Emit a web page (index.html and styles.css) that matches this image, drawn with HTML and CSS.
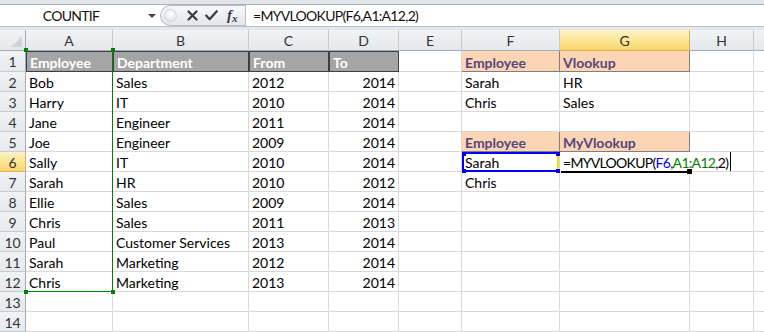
FILE: index.html
```html
<!DOCTYPE html>
<html lang="en">
<head>
    <meta charset="UTF-8">
    <title>MYVLOOKUP - Sheet1</title>
    <link rel="stylesheet" href="styles.css">
</head>
<body>
    <div class="title-strip"></div>

    <!-- formula bar -->
    <div class="formula-bar">
        <div class="name-box">
            <span class="name-text">COUNTIF</span>
            <span class="name-arrow"></span>
        </div>
        <div class="fx-tools">
            <span class="grip"></span>
            <svg class="tool-icon" width="11" height="11" viewBox="0 0 11 11">
                <path d="M1.5 1.5L9.5 9.5M9.5 1.5L1.5 9.5" stroke="#3a3a3a" stroke-width="2.2" stroke-linecap="round" fill="none"/>
            </svg>
            <svg class="tool-icon" width="13" height="11" viewBox="0 0 13 11">
                <path d="M1.2 5.6L4.6 9.2L11.8 1.2" stroke="#3a3a3a" stroke-width="2.2" stroke-linecap="round" stroke-linejoin="round" fill="none"/>
            </svg>
            <span class="fx-label"><i>f</i><i class="fx-sub">x</i></span>
        </div>
        <div class="formula-input">=MYVLOOKUP(F6,A1:A12,2)</div>
    </div>
    <div class="bar-gap"></div>

    <!-- worksheet -->
    <div class="sheet">
        <table class="grid">
            <colgroup>
                <col class="w-hdr"><col class="w-a"><col class="w-b"><col class="w-c"><col class="w-d">
                <col class="w-e"><col class="w-f"><col class="w-g"><col class="w-h"><col class="w-i">
            </colgroup>
            <thead>
                <tr class="col-heads">
                    <th class="corner"></th><th>A</th><th>B</th><th>C</th><th>D</th>
                    <th>E</th><th>F</th><th class="current">G</th><th>H</th><th></th>
                </tr>
            </thead>
            <tbody>
                <tr class="first-row">
                    <th>1</th><td class="check">Employee</td><td class="check">Department</td><td class="check">From</td><td class="check">To</td>
                    <td></td><td class="input-head">Employee</td><td class="input-head">Vlookup</td><td></td><td></td>
                </tr>
                <tr><th>2</th><td>Bob</td><td>Sales</td><td>2012</td><td class="num">2014</td><td></td><td>Sarah</td><td>HR</td><td></td><td></td></tr>
                <tr><th>3</th><td>Harry</td><td>IT</td><td>2010</td><td class="num">2014</td><td></td><td>Chris</td><td>Sales</td><td></td><td></td></tr>
                <tr><th>4</th><td>Jane</td><td>Engineer</td><td>2011</td><td class="num">2014</td><td></td><td></td><td></td><td></td><td></td></tr>
                <tr><th>5</th><td>Joe</td><td>Engineer</td><td>2009</td><td class="num">2014</td><td></td><td class="input-head">Employee</td><td class="input-head">MyVlookup</td><td></td><td></td></tr>
                <tr>
                    <th class="current">6</th><td>Sally</td><td>IT</td><td>2010</td><td class="num">2014</td><td></td><td>Sarah</td>
                    <td class="editing"><span class="editor">=MYVLOOKUP(<span class="ref-blue">F6</span>,<span class="ref-green">A1:A12</span>,2)</span></td>
                    <td></td><td></td>
                </tr>
                <tr><th>7</th><td>Sarah</td><td>HR</td><td>2010</td><td class="num">2012</td><td></td><td>Chris</td><td></td><td></td><td></td></tr>
                <tr><th>8</th><td>Ellie</td><td>Sales</td><td>2009</td><td class="num">2014</td><td></td><td></td><td></td><td></td><td></td></tr>
                <tr><th>9</th><td>Chris</td><td>Sales</td><td>2011</td><td class="num">2013</td><td></td><td></td><td></td><td></td><td></td></tr>
                <tr><th>10</th><td>Paul</td><td>Customer Services</td><td>2013</td><td class="num">2014</td><td></td><td></td><td></td><td></td><td></td></tr>
                <tr><th>11</th><td>Sarah</td><td>Marketing</td><td>2012</td><td class="num">2014</td><td></td><td></td><td></td><td></td><td></td></tr>
                <tr><th>12</th><td>Chris</td><td>Marketing</td><td>2013</td><td class="num">2014</td><td></td><td></td><td></td><td></td><td></td></tr>
                <tr><th>13</th><td></td><td></td><td></td><td></td><td></td><td></td><td></td><td></td><td></td></tr>
                <tr><th>14</th><td></td><td></td><td></td><td></td><td></td><td></td><td></td><td></td><td></td></tr>
            </tbody>
        </table>

        <!-- range references of the formula being typed -->
        <div class="range range-green">
            <span class="handle tl"></span><span class="handle tr"></span>
            <span class="handle bl"></span><span class="handle br"></span>
        </div>
        <div class="range range-blue">
            <span class="handle tl"></span><span class="handle tr"></span>
            <span class="handle bl"></span><span class="handle br"></span>
        </div>
        <div class="active-edge"></div>
        <div class="fill-handle"></div>
    </div>
</body>
</html>
```

FILE: styles.css
```css
* {
    margin: 0;
    padding: 0;
    box-sizing: border-box;
}

body {
    width: 764px;
    height: 332px;
    overflow: hidden;
    font-family: Lato, 'Liberation Sans', sans-serif;
    font-size: 14px;
    color: #000;
    background-color: #fff;
}

.title-strip {
    height: 5px;
    background-color: #e2e6eb;
    border-bottom: 1px solid #a9b0b9;
}

/* formula bar */
.formula-bar {
    display: flex;
    height: 21px;
    background-color: #fff;
}

.name-box {
    width: 160px;
    display: flex;
    align-items: center;
}

.name-text {
    width: 142px;
    text-align: center;
    color: #111;
    letter-spacing: -0.7px;
}

.name-arrow {
    margin-left: 6px;
    border-left: 4px solid transparent;
    border-right: 4px solid transparent;
    border-top: 4px solid #444;
}

.fx-tools {
    width: 85px;
    display: flex;
    align-items: center;
    background: linear-gradient(#f7f8fa, #e3e7ec);
    border: 1px solid #b7bec7;
    border-right: none;
    border-radius: 11px 0 0 11px;
    padding-left: 3px;
}

.grip {
    width: 13px;
    height: 13px;
    border-radius: 50%;
    background: radial-gradient(circle at 50% 35%, #ffffff, #dcdfe3);
    border: 1px solid #cdd1d6;
}

.tool-icon {
    margin-left: 10px;
}

.tool-icon + .tool-icon {
    margin-left: 7px;
}

.fx-label {
    margin-left: 9px;
    font-family: 'Liberation Serif', serif;
    font-weight: bold;
    font-size: 15px;
    color: #3a3a3a;
    line-height: 1;
}

.fx-sub {
    font-size: 11px;
    position: relative;
    top: 2px;
}

.formula-input {
    flex: 1;
    border-left: 1px solid #b7bec7;
    padding-left: 7px;
    line-height: 21px;
    color: #111;
    letter-spacing: -0.7px;
}

.bar-gap {
    height: 4px;
    background-color: #e4e8ed;
    border-top: 1px solid #b9c0c8;
}

/* worksheet grid */
.sheet {
    position: relative;
}

.grid {
    table-layout: fixed;
    border-collapse: separate;
    border-spacing: 0;
    width: 818px;
}

.w-hdr { width: 26px; }
.w-a { width: 87px; }
.w-b { width: 136px; }
.w-c { width: 80px; }
.w-d { width: 70px; }
.w-e { width: 63px; }
.w-f { width: 98px; }
.w-g { width: 130px; }
.w-h { width: 64px; }
.w-i { width: 64px; }

.grid th {
    font-weight: normal;
    color: #333;
    background: linear-gradient(#f1f3f5, #e5e8ec);
    text-align: center;
}

.col-heads th {
    height: 21px;
    border-right: 1px solid #c6cbd1;
    border-bottom: 1px solid #a3abb5;
}

.col-heads .corner {
    position: relative;
    border-right-color: #a3abb5;
}

.corner::after {
    content: "";
    position: absolute;
    right: 3px;
    bottom: 3px;
    border-left: 11px solid transparent;
    border-bottom: 11px solid #cfd4da;
}

tbody th {
    height: 20px;
    padding-top: 1px;
    border-right: 1px solid #a3abb5;
    border-bottom: 1px solid #c6cbd1;
}

.grid th.current {
    background: linear-gradient(#fdf3c8, #fbe492 55%, #f8d772);
    border-color: #e2ae4a;
}

.grid td {
    height: 20px;
    padding: 2px 3px 0;
    line-height: 17px;
    white-space: nowrap;
    border-right: 1px solid #d9d9d9;
    border-bottom: 1px solid #d9d9d9;
}

.first-row th,
.first-row td {
    height: 21px;
}

.grid td.num {
    text-align: right;
}

.grid td.check {
    background-color: #a5a5a5;
    color: #fff;
    font-weight: bold;
    border: 1px solid #3f3f3f;
    padding-top: 1px;
}

.grid td.input-head {
    background-color: #fcd5b4;
    color: #56457e;
    font-weight: bold;
    border-right-color: #7f7f7f;
    border-bottom-color: #7f7f7f;
}

.grid td.editing {
    overflow: visible;
    padding-top: 0;
}

.editor {
    display: inline-block;
    background-color: #fff;
    padding: 2px 2px 0 0;
    line-height: 17px;
    letter-spacing: -0.7px;
    border-right: 1px solid #000;
}

.ref-blue {
    color: #0000ff;
}

.ref-green {
    color: #008000;
}

/* range outlines laid over the grid */
.range {
    position: absolute;
}

.range-green {
    left: 26px;
    top: 20px;
    width: 87px;
    height: 242px;
    color: #008000;
    border-right: 1px solid #008000;
    border-bottom: 1px solid #008000;
}

.range-blue {
    left: 462px;
    top: 122px;
    width: 97px;
    height: 20px;
    color: #0000ff;
    border: 2px solid #0000ff;
    border-right-color: #f2e200;
}

.handle {
    position: absolute;
    width: 4px;
    height: 4px;
    background-color: currentColor;
}

.tl { left: -2px; top: -2px; }
.tr { right: -3px; top: -2px; }
.bl { left: -2px; bottom: -3px; }
.br { right: -3px; bottom: -3px; }

.active-edge {
    position: absolute;
    left: 561px;
    top: 141px;
    width: 128px;
    height: 2px;
    background-color: #000;
}

.fill-handle {
    position: absolute;
    left: 687px;
    top: 139px;
    width: 5px;
    height: 5px;
    background-color: #000;
}
```
